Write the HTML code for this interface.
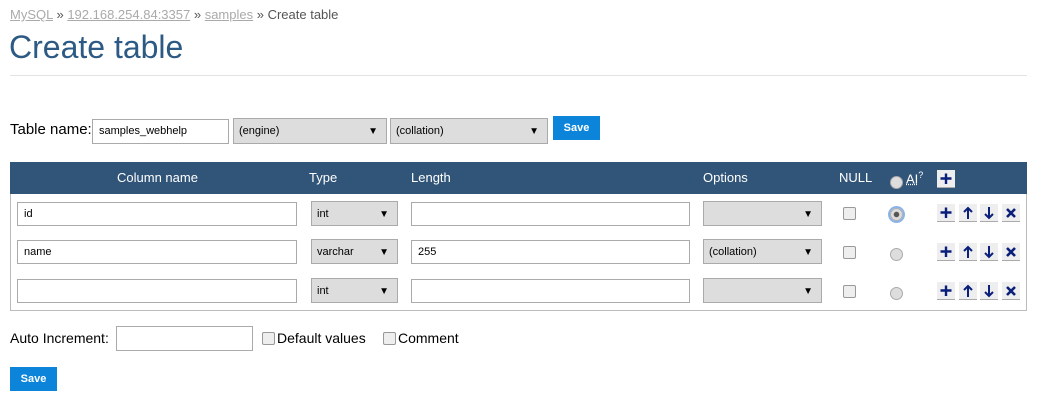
<!DOCTYPE html>
<html><head><style>
body{margin:0;width:1040px;height:402px;background:#fff;font-family:"Liberation Sans",sans-serif;position:relative;overflow:hidden;color:#000}
.a{position:absolute}
.in{position:absolute;border:1px solid #aaa;background:#fff;box-sizing:border-box;font-size:11px;padding-left:6px;line-height:22px}
.sel{position:absolute;border:1px solid #aaa;background:#ddd;box-sizing:border-box;font-size:11px;padding-left:5px;line-height:25px}
.sel:after{content:"▼";position:absolute;right:8px;top:0;font-size:10px}
.cb{position:absolute;width:11px;height:11px;border:1px solid #999;border-radius:2px;background:#eee}
.rd{position:absolute;width:11px;height:11px;border:1px solid #aaa;border-radius:50%;background:#ddd}
.btn{position:absolute;width:18px;height:17px;background:#eee;border-bottom:1px solid #aaa}
.btn svg{position:absolute;left:0;top:0}
.save{position:absolute;background:#0b84d9;color:#fff;font-size:11px;font-weight:bold;text-align:center;line-height:24px;width:47px;height:24px}
.h{position:absolute;top:170px;color:#fff;font-size:13px}
</style></head><body>
<svg width="0" height="0" style="position:absolute">
<defs>
<g id="p"><path d="M9 3.5V14M3.5 8.5H14.5" stroke="#0a1f7a" stroke-width="2.4" fill="none"/></g>
<g id="u"><path d="M9 15V4M5 8L9 4L13 8" stroke="#0a1f7a" stroke-width="2" fill="none"/></g>
<g id="d"><path d="M9 3V14M5 10L9 14L13 10" stroke="#0a1f7a" stroke-width="2" fill="none"/></g>
<g id="x"><path d="M5 5L13 13M13 5L5 13" stroke="#0a1f7a" stroke-width="2.6" fill="none"/></g>
</defs></svg>
<div class="a" style="left:10px;top:7px;font-size:13px;color:#555"><u style="color:#aaa">MySQL</u> » <u style="color:#aaa">192.168.254.84:3357</u> » <u style="color:#aaa">samples</u> » Create table</div>
<div class="a" style="left:9px;top:29px;font-size:32px;color:#2c5a84">Create table</div>
<div class="a" style="left:10px;top:75px;width:1017px;height:1px;background:#e3e3e3"></div>
<div class="a" style="left:10px;top:121px;font-size:15px">Table name:</div>
<div class="in" style="left:92px;top:119px;width:137px;height:25px;line-height:23px">samples_webhelp</div>
<div class="sel" style="left:233px;top:118px;width:154px;height:26px;line-height:25px">(engine)</div>
<div class="sel" style="left:390px;top:118px;width:158px;height:26px;line-height:25px">(collation)</div>
<div class="save" style="left:553px;top:116px">Save</div>
<div class="a" style="left:10px;top:162px;width:1017px;height:149px;border:1px solid #bbb;box-sizing:border-box"></div>
<div class="a" style="left:10px;top:162px;width:1017px;height:32px;background:#315579"></div>
<div class="h" style="left:117px">Column name</div>
<div class="h" style="left:309px">Type</div>
<div class="h" style="left:411px">Length</div>
<div class="h" style="left:703px">Options</div>
<div class="h" style="left:839px">NULL</div>
<div class="rd" style="left:890px;top:176px;background:#ddd"></div>
<div class="h" style="left:906px"><u style="text-decoration-style:dotted">AI</u><sup style="font-size:9px">?</sup></div>
<div class="btn" style="left:937px;top:170px"><svg width="18" height="17"><use href="#p"/></svg></div>

<div class="in" style="left:17px;top:202px;width:280px;height:24px">id</div>
<div class="sel" style="left:311px;top:201px;width:87px;height:25px">int</div>
<div class="in" style="left:411px;top:202px;width:279px;height:24px"></div>
<div class="sel" style="left:703px;top:201px;width:119px;height:25px"></div>
<div class="cb" style="left:843px;top:207px"></div>
<div class="rd" style="left:890px;top:208px;box-shadow:0 0 0 2px #8ab4e8;background:radial-gradient(#555 30%,#ddd 40%)"></div>

<div class="in" style="left:17px;top:240px;width:280px;height:24px">name</div>
<div class="sel" style="left:311px;top:239px;width:87px;height:25px">varchar</div>
<div class="in" style="left:411px;top:240px;width:279px;height:24px">255</div>
<div class="sel" style="left:703px;top:239px;width:119px;height:25px">(collation)</div>
<div class="cb" style="left:843px;top:246px"></div>
<div class="rd" style="left:890px;top:248px"></div>

<div class="in" style="left:17px;top:279px;width:280px;height:24px"></div>
<div class="sel" style="left:311px;top:278px;width:87px;height:25px">int</div>
<div class="in" style="left:411px;top:279px;width:279px;height:24px"></div>
<div class="sel" style="left:703px;top:278px;width:119px;height:25px"></div>
<div class="cb" style="left:843px;top:285px"></div>
<div class="rd" style="left:890px;top:287px"></div>

<div class="btn" style="left:937px;top:204px"><svg width="18" height="17"><use href="#p"/></svg></div><div class="btn" style="left:959px;top:204px"><svg width="18" height="17"><use href="#u"/></svg></div><div class="btn" style="left:980px;top:204px"><svg width="18" height="17"><use href="#d"/></svg></div><div class="btn" style="left:1002px;top:204px"><svg width="18" height="17"><use href="#x"/></svg></div>
<div class="btn" style="left:937px;top:243px"><svg width="18" height="17"><use href="#p"/></svg></div><div class="btn" style="left:959px;top:243px"><svg width="18" height="17"><use href="#u"/></svg></div><div class="btn" style="left:980px;top:243px"><svg width="18" height="17"><use href="#d"/></svg></div><div class="btn" style="left:1002px;top:243px"><svg width="18" height="17"><use href="#x"/></svg></div>
<div class="btn" style="left:937px;top:282px"><svg width="18" height="17"><use href="#p"/></svg></div><div class="btn" style="left:959px;top:282px"><svg width="18" height="17"><use href="#u"/></svg></div><div class="btn" style="left:980px;top:282px"><svg width="18" height="17"><use href="#d"/></svg></div><div class="btn" style="left:1002px;top:282px"><svg width="18" height="17"><use href="#x"/></svg></div>

<div class="a" style="left:10px;top:330px;font-size:14px">Auto Increment:</div>
<div class="in" style="left:116px;top:326px;width:137px;height:25px"></div>
<div class="cb" style="left:262px;top:332px"></div>
<div class="a" style="left:277px;top:330px;font-size:14px">Default values</div>
<div class="cb" style="left:383px;top:332px"></div>
<div class="a" style="left:398px;top:330px;font-size:14px">Comment</div>
<div class="save" style="left:10px;top:367px">Save</div>
</body></html>
